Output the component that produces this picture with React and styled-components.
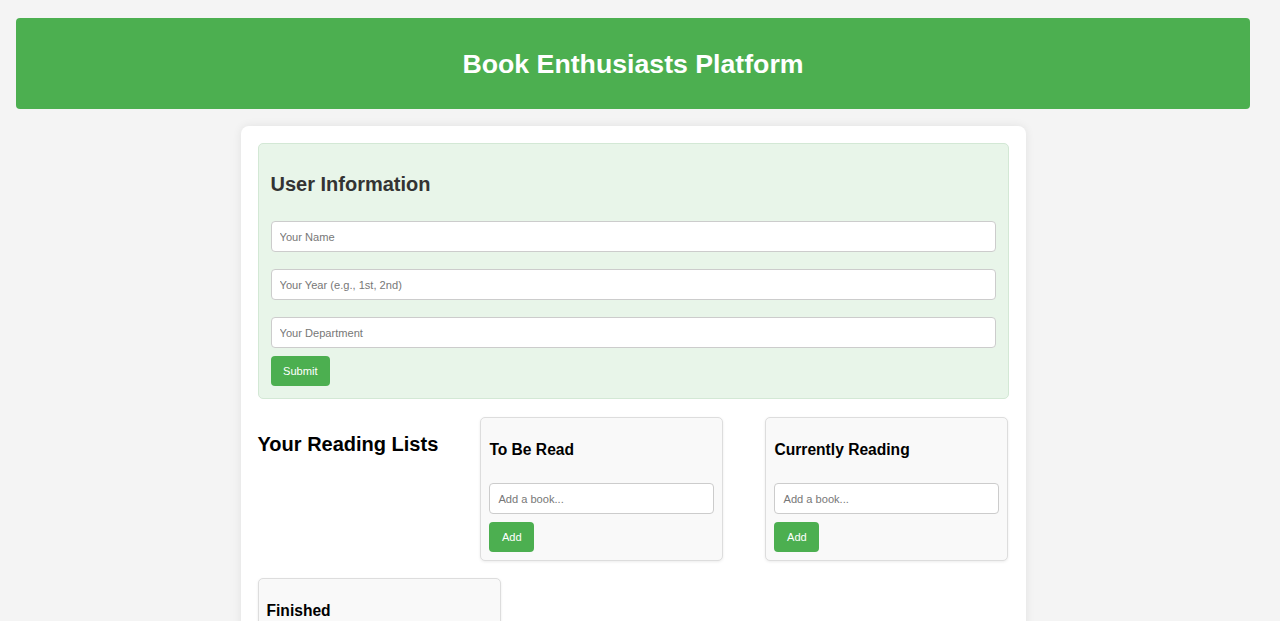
import React, { useState } from 'react';
import styled, { createGlobalStyle } from 'styled-components';

const LISTS = [
  { id: 'tbr', title: 'To Be Read' },
  { id: 'current', title: 'Currently Reading' },
  { id: 'finished', title: 'Finished' },
];

const FIELDS = [
  { id: 'name', placeholder: 'Your Name' },
  { id: 'year', placeholder: 'Your Year (e.g., 1st, 2nd)' },
  { id: 'department', placeholder: 'Your Department' },
];

const App = () => {
  const [user, setUser] = useState({ name: '', year: '', department: '' });
  const [books, setBooks] = useState({ tbr: [], current: [], finished: [] });
  const [drafts, setDrafts] = useState({ tbr: '', current: '', finished: '' });

  const addBook = id => {
    if (!drafts[id].trim()) return;
    setBooks(current => ({ ...current, [id]: [...current[id], drafts[id]] }));
    setDrafts(current => ({ ...current, [id]: '' }));
  };

  return (
    <>
      <GlobalStyle />
      <Header>
        <Title>Book Enthusiasts Platform</Title>
      </Header>
      <Main>
        <UserSection>
          <SectionTitle>User Information</SectionTitle>
          {FIELDS.map(({ id, placeholder }) => (
            <Input
              key={id}
              placeholder={placeholder}
              value={user[id]}
              onChange={e => setUser({ ...user, [id]: e.target.value })}
            />
          ))}
          <Button>Submit</Button>
        </UserSection>
        <ListsArea>
          <ListsTitle>Your Reading Lists</ListsTitle>
          {LISTS.map(({ id, title }) => (
            <ListCard key={id}>
              <ListTitle>{title}</ListTitle>
              <Input
                placeholder="Add a book..."
                value={drafts[id]}
                onChange={e => setDrafts({ ...drafts, [id]: e.target.value })}
              />
              <Button onClick={() => addBook(id)}>Add</Button>
              {books[id].map((book, i) => (
                <BookItem key={i}>{book}</BookItem>
              ))}
            </ListCard>
          ))}
        </ListsArea>
      </Main>
    </>
  );
};

export default App;

const GlobalStyle = createGlobalStyle`
  * {
    box-sizing: border-box;
  }

  body {
    margin: 0;
    padding: 18px 30px 340px 16px;
    background-color: #f4f4f4;
    font-family: 'Liberation Sans', Arial, sans-serif;
  }
`;

const Header = styled.header`
  display: flex;
  justify-content: center;
  align-items: center;
  height: 91px;
  background-color: #4caf50;
  border-radius: 4px;
`;

const Title = styled.h1`
  margin: 2px 0 0;
  color: #ffffff;
  font-size: 26.7px;
  font-weight: 700;
`;

const Main = styled.main`
  width: 785px;
  margin: 17px auto 0;
  padding: 17px;
  background-color: #ffffff;
  border-radius: 8px;
  box-shadow: 0 0 10px rgba(0, 0, 0, 0.08);
`;

const UserSection = styled.section`
  display: flex;
  flex-direction: column;
  align-items: flex-start;
  padding: 12px;
  background-color: #e8f5e9;
  border: 1px solid #d3e8d5;
  border-radius: 5px;
`;

const SectionTitle = styled.h2`
  margin: 16px 0 25px;
  color: #333333;
  font-size: 20px;
  line-height: 24px;
`;

const Input = styled.input`
  width: 100%;
  height: 31px;
  margin-bottom: 17px;
  padding: 0 8px;
  border: 1px solid #cccccc;
  border-radius: 4px;
  background-color: #ffffff;
  font-family: inherit;
  font-size: 11.1px;
  outline: none;

  &::placeholder {
    color: #777777;
  }

  &:last-of-type {
    margin-bottom: 8px;
  }
`;

const Button = styled.button`
  height: 30px;
  padding: 0 12.5px;
  border: none;
  border-radius: 4px;
  background-color: #4caf50;
  color: #ffffff;
  font-family: inherit;
  font-size: 11.1px;
  cursor: pointer;

  &:hover {
    background-color: #45a049;
  }
`;

const ListsArea = styled.div`
  display: flex;
  flex-wrap: wrap;
  justify-content: space-between;
  align-items: flex-start;
  row-gap: 17px;
  margin-top: 18px;
`;

const ListsTitle = styled.h2`
  margin: 15px 0 0;
  color: #000000;
  font-size: 20px;
  line-height: 24px;
`;

const ListCard = styled.div`
  display: flex;
  flex-direction: column;
  align-items: flex-start;
  width: 243px;
  padding: 8px;
  background-color: #f9f9f9;
  border: 1px solid #dddddd;
  border-radius: 5px;
  box-shadow: 0 1px 3px rgba(0, 0, 0, 0.08);

  ${Input} {
    margin-bottom: 8px;
  }
`;

const ListTitle = styled.h3`
  margin: 15px 0 24px;
  color: #000000;
  font-size: 15.6px;
  line-height: 18px;
`;

const BookItem = styled.div`
  margin-top: 8px;
  font-size: 12px;
`;
